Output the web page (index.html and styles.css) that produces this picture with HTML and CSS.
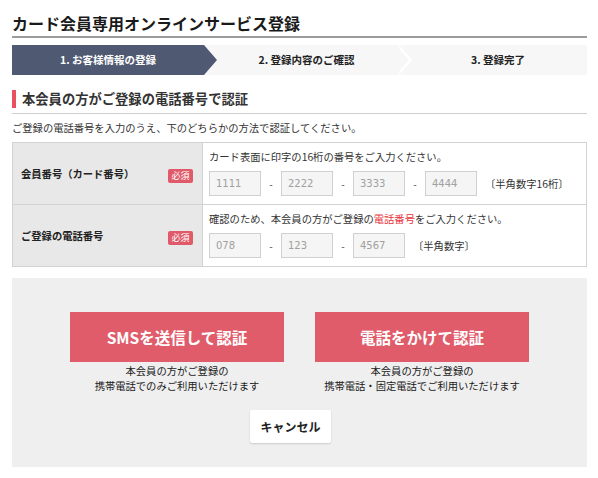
FILE: index.html
```html
<!DOCTYPE html>
<html lang="ja">
<head>
<meta charset="utf-8">
<title>カード会員専用オンラインサービス登録</title>
<link rel="stylesheet" href="styles.css">
</head>
<body>
<div class="page">
  <h1 class="title">カード会員専用オンラインサービス登録</h1>
  <ol class="steps">
    <li class="step step-active">1. お客様情報の登録</li>
    <li class="step step-mid">2. 登録内容のご確認</li>
    <li class="step step-last">3. 登録完了</li>
  </ol>
  <h2 class="section">本会員の方がご登録の電話番号で認証</h2>
  <p class="desc">ご登録の電話番号を入力のうえ、下のどちらかの方法で認証してください。</p>
  <div class="form">
    <div class="row">
      <div class="label"><span>会員番号（カード番号）</span><span class="badge">必須</span></div>
      <div class="field">
        <p class="hint">カード表面に印字の16桁の番号をご入力ください。</p>
        <div class="inputs">
          <input class="box" type="text" placeholder="1111">
          <span class="dash">-</span>
          <input class="box" type="text" placeholder="2222">
          <span class="dash">-</span>
          <input class="box" type="text" placeholder="3333">
          <span class="dash">-</span>
          <input class="box" type="text" placeholder="4444">
          <span class="note">〔半角数字16桁〕</span>
        </div>
      </div>
    </div>
    <div class="row">
      <div class="label"><span>ご登録の電話番号</span><span class="badge">必須</span></div>
      <div class="field">
        <p class="hint">確認のため、本会員の方がご登録の<span class="red">電話番号</span>をご入力ください。</p>
        <div class="inputs">
          <input class="box" type="text" placeholder="078">
          <span class="dash">-</span>
          <input class="box" type="text" placeholder="123">
          <span class="dash">-</span>
          <input class="box" type="text" placeholder="4567">
          <span class="note">〔半角数字〕</span>
        </div>
      </div>
    </div>
  </div>
  <div class="actions">
    <div class="choices">
      <div class="choice">
        <button class="btn-main" type="button">SMSを送信して認証</button>
        <p class="caption">本会員の方がご登録の<br>携帯電話でのみご利用いただけます</p>
      </div>
      <div class="choice">
        <button class="btn-main" type="button">電話をかけて認証</button>
        <p class="caption">本会員の方がご登録の<br>携帯電話・固定電話でご利用いただけます</p>
      </div>
    </div>
    <div class="cancel-wrap">
      <button class="btn-cancel" type="button">キャンセル</button>
    </div>
  </div>
</div>
</body>
</html>
```

FILE: styles.css
```css
* { box-sizing: border-box; }
html, body { margin: 0; padding: 0; background: #fff; }
body {
  font-family: "Noto Sans CJK JP", "Noto Sans", sans-serif;
  color: #333;
}
.page {
  width: 598px;
  padding: 12px 11px 0 12px;
}
.title {
  margin: 0;
  font-size: 16px;
  line-height: 22px;
  font-weight: bold;
  color: #1a1a1a;
  padding-bottom: 2px;
  border-bottom: 2px solid #9c9c9c;
}
.steps {
  list-style: none;
  margin: 7px 0 0;
  padding: 0;
  display: flex;
  background: #f7f7f7;
  height: 30px;
}
.step {
  width: 192px;
  flex: none;
  position: relative;
  font-size: 10.5px;
  font-weight: bold;
  line-height: 30px;
  text-align: center;
  color: #222;
}
.step-last { flex: 1; width: auto; }
.step-active {
  background: #4f5a72;
  color: #fff;
  z-index: 2;
}
.step-active::after {
  content: "";
  position: absolute;
  top: 0;
  right: -13px;
  border-top: 15px solid transparent;
  border-bottom: 15px solid transparent;
  border-left: 13px solid #4f5a72;
}
.step-mid, .step-last { padding-left: 13px; }
.step-mid { z-index: 1; }
.step-mid::before, .step-mid::after {
  content: "";
  position: absolute;
  top: 0;
  border-top: 15px solid transparent;
  border-bottom: 15px solid transparent;
}
.step-mid::before {
  right: -16px;
  border-left: 13px solid #fff;
}
.step-mid::after {
  right: -13px;
  border-left: 13px solid #f7f7f7;
}
.section {
  margin: 15px 0 0;
  font-size: 13.3px;
  line-height: 18px;
  font-weight: bold;
  color: #333;
  padding: 0 0 5px 10px;
  border-bottom: 1px solid #cfcfcf;
  position: relative;
}
.section::before {
  content: "";
  position: absolute;
  left: 0;
  top: 0;
  width: 4px;
  height: 18px;
  background: #e9515f;
}
.desc {
  margin: 6px 0 0;
  font-size: 10.3px;
  line-height: 15px;
  color: #333;
}
.form {
  margin-top: 7px;
  border: 1px solid #d2d2d2;
}
.row {
  display: flex;
  height: 61px;
}
.row + .row { border-top: 1px solid #d2d2d2; height: 62px; }
.label {
  width: 190px;
  flex: none;
  background: #e8e8e8;
  border-right: 1px solid #d2d2d2;
  display: flex;
  align-items: center;
  justify-content: space-between;
  padding: 0 9px 0 8px;
  font-size: 10.3px;
  font-weight: bold;
  color: #222;
}
.badge {
  background: #e05a6a;
  color: #fff;
  font-size: 9px;
  font-weight: normal;
  width: 25px;
  height: 14px;
  line-height: 14px;
  text-align: center;
  border-radius: 2px;
  margin-top: 4px;
}
.field {
  flex: 1;
  background: #fff;
  padding: 5px 0 0 6px;
}
.hint {
  margin: 0;
  font-size: 10.3px;
  line-height: 17px;
  color: #333;
}
.red { color: #e8333a; }
.inputs {
  display: flex;
  align-items: center;
  gap: 8px;
  margin-top: 6px;
}
.box {
  width: 52px;
  height: 25px;
  border: 1px solid #d0d0d0;
  background: #f5f5f5;
  padding: 0 6px;
  font-family: "DejaVu Sans", sans-serif;
  font-size: 10px;
  color: #333;
  margin: 0;
}
.box::placeholder { color: #a0a0a0; }
.dash {
  width: 4px;
  font-size: 10px;
  color: #444;
  text-align: center;
}
.note {
  font-size: 10.3px;
  color: #333;
}
.actions {
  margin-top: 11px;
  background: #efefef;
  padding: 34px 0 24px;
}
.choices {
  display: flex;
  justify-content: center;
  gap: 31px;
}
.choice {
  width: 214px;
  text-align: center;
}
.btn-main {
  display: block;
  width: 100%;
  height: 50px;
  border: none;
  border-radius: 0;
  background: #e05c6b;
  color: #fff;
  font-family: "Noto Sans CJK JP", sans-serif;
  font-size: 15.5px;
  font-weight: bold;
  cursor: pointer;
}
.caption {
  margin: 1px -20px 0;
  font-size: 10.3px;
  line-height: 15px;
  color: #1a1a1a;
}
.cancel-wrap {
  display: flex;
  justify-content: center;
  margin-top: 17px;
  padding-right: 18px;
}
.btn-cancel {
  width: 81px;
  height: 33px;
  border: none;
  border-radius: 2px;
  background: #fff;
  box-shadow: 0 1px 2px rgba(0,0,0,0.15);
  font-family: "Noto Sans CJK JP", sans-serif;
  font-size: 12px;
  font-weight: bold;
  color: #222;
}
```
